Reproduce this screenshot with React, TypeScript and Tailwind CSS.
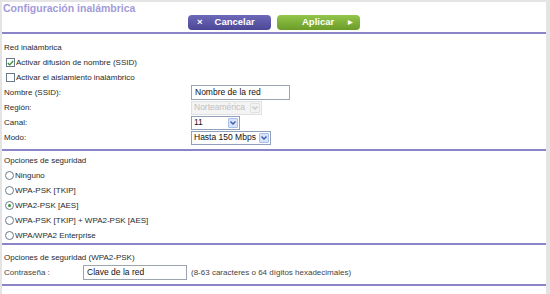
import { FC, ReactNode } from 'react';

const Divider: FC<{ className?: string }> = ({ className = '' }) => (
  <div className={`h-[2px] bg-[#8b84c9] ${className}`} />
);

const Row: FC<{ label: string; children?: ReactNode }> = ({ label, children }) => (
  <div className="flex h-[15px] items-center">
    <span className="w-[189px] pl-[2px]">{label}</span>
    {children}
  </div>
);

// small drop arrow like old IE selects
const Arrow: FC<{ disabled?: boolean }> = ({ disabled }) => (
  <span
    className={`ml-auto mr-[1px] flex h-[10px] w-[10px] items-center justify-center rounded-[1px] border ${
      disabled ? 'border-[#e2e2e2] bg-[#f2f2f2]' : 'border-[#aac0ea] bg-[#d7e3fa]'
    }`}
  >
    <svg width="6" height="4" viewBox="0 0 6 4">
      <path d="M0.5 0.5 L3 3 L5.5 0.5" fill="none" stroke={disabled ? '#c9c9c9' : '#3a5ab0'} strokeWidth="1.4" />
    </svg>
  </span>
);

const Select: FC<{ value: string; width: string; disabled?: boolean }> = ({ value, width, disabled }) => (
  <div
    className={`flex h-[14px] items-center border pl-[2px] text-[8.5px] ${width} ${
      disabled ? 'border-[#e0e0e0] bg-[#f4f4f4] text-[#c0c0c0]' : 'border-[#8fa0b8] bg-white text-[#111]'
    }`}
  >
    <span>{value}</span>
    <Arrow disabled={disabled} />
  </div>
);

const Radio: FC<{ label: string; checked?: boolean }> = ({ label, checked }) => (
  <div className="flex h-[15px] items-center pl-[3px]">
    <span className="mr-[1px] flex h-[9px] w-[9px] items-center justify-center rounded-full border border-[#6a7a8a] bg-white">
      {checked && <span className="h-[3px] w-[3px] rounded-full bg-[#2f9a2f]" />}
    </span>
    <span>{label}</span>
  </div>
);

const Check: FC<{ label: string; checked?: boolean }> = ({ label, checked }) => (
  <div className="flex h-[15px] items-center pl-[4px]">
    <span className="mr-[1px] flex h-[9px] w-[9px] items-center justify-center border border-[#6a7a8a] bg-white">
      {checked && (
        <svg width="7" height="6" viewBox="0 0 7 6">
          <path d="M0.8 3 L2.7 4.9 L6.2 0.8" fill="none" stroke="#2f8a2f" strokeWidth="1.3" />
        </svg>
      )}
    </span>
    <span>{label}</span>
  </div>
);

const App: FC = () => {
  return (
    <div className="h-[294px] w-[550px] overflow-hidden bg-[#e4e4e4] pl-[2px] pr-[4px] pt-[2px] font-['Liberation_Sans',Arial,sans-serif] text-[8px] text-[#2a2a2a]">
      <div className="h-full bg-white">
        <div className="h-[13px] pl-[1px] text-[10.5px] font-bold leading-[12px] text-[#a39bd8]">
          Configuración inalámbrica
        </div>

        <div className="flex h-[15px] gap-[6px] pl-[186px]">
          <button className="flex h-[15px] w-[83px] items-center rounded-[4px] bg-gradient-to-b from-[#6d68b8] to-[#4c4696] pl-[9px] text-[9.5px] font-bold text-white">
            <span className="mr-[12px]">×</span>
            Cancelar
          </button>
          <button className="flex h-[15px] w-[83px] items-center rounded-[4px] bg-gradient-to-b from-[#93c64a] to-[#6a9c28] pl-[25px] text-[9.5px] font-bold text-white">
            Aplicar
            <span className="ml-[14px] text-[6px]">▶</span>
          </button>
        </div>

        <Divider className="mt-[2px]" />

        <div className="mt-[6px]">
          <div className="flex h-[15px] items-center pl-[2px]">Red inalámbrica</div>
          <Check label="Activar difusión de nombre (SSID)" checked />
          <Check label="Activar el aislamiento inalámbrico" />
          <Row label="Nombre (SSID):">
            <div className="flex h-[15px] w-[99px] items-center border border-[#9aa5b0] pl-[3px] text-[8.5px] text-[#111]">
              Nombre de la red
            </div>
          </Row>
          <Row label="Región:">
            <Select value="Norteamérica" width="w-[71px]" disabled />
          </Row>
          <Row label="Canal:">
            <Select value="11" width="w-[49px]" />
          </Row>
          <Row label="Modo:">
            <Select value="Hasta 150 Mbps" width="w-[80px]" />
          </Row>
        </div>

        <Divider className="mt-[4px]" />

        <div className="mt-[2px]">
          <div className="flex h-[15px] items-center pl-[2px]">Opciones de seguridad</div>
          <Radio label="Ninguno" />
          <Radio label="WPA-PSK [TKIP]" />
          <Radio label="WPA2-PSK [AES]" checked />
          <Radio label="WPA-PSK [TKIP] + WPA2-PSK [AES]" />
          <Radio label="WPA/WPA2 Enterprise" />
        </div>

        <Divider />

        <div className="mt-[5px]">
          <div className="flex h-[15px] items-center pl-[2px]">Opciones de seguridad (WPA2-PSK)</div>
          <div className="flex h-[15px] items-center">
            <span className="w-[81px] pl-[2px] text-[#444]">Contraseña :</span>
            <div className="flex h-[15px] w-[104px] items-center border border-[#9aa5b0] pl-[3px] text-[8.5px] text-[#111]">
              Clave de la red
            </div>
            <span className="ml-[4px] text-[#444]">(8-63 caracteres o 64 dígitos hexadecimales)</span>
          </div>
        </div>

        <Divider className="mt-[4px]" />
      </div>
    </div>
  );
};

export default App;
